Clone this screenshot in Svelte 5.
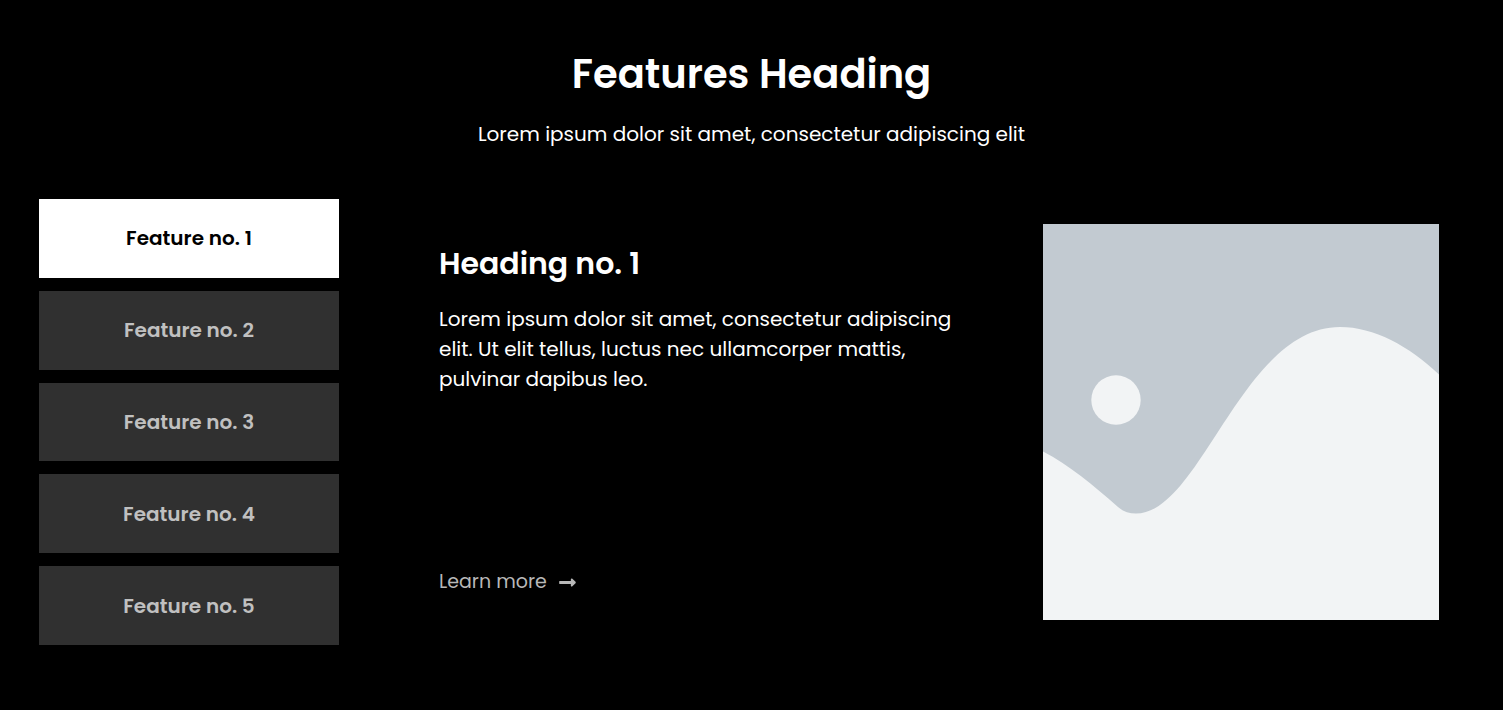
<script>
  const features = [1, 2, 3, 4, 5].map((n) => ({
    tab: `Feature no. ${n}`,
    heading: `Heading no. ${n}`
  }));
  let active = $state(0);
</script>

<section class="features">
  <header>
    <h1>Features Heading</h1>
    <p>Lorem ipsum dolor sit amet, consectetur adipiscing elit</p>
  </header>

  <div class="layout">
    <div class="tabs" role="tablist" aria-label="Features Heading">
      {#each features as feature, i}
        <button
          type="button"
          role="tab"
          id="tab-{i}"
          aria-selected={active === i}
          aria-controls="panel"
          class:active={active === i}
          onclick={() => (active = i)}>{feature.tab}</button>
      {/each}
    </div>

    <div class="panel" id="panel" role="tabpanel" aria-labelledby="tab-{active}">
      <div class="copy">
        <h2>{features[active].heading}</h2>
        <p>
          Lorem ipsum dolor sit amet, consectetur adipiscing elit. Ut elit tellus, luctus nec
          ullamcorper mattis, pulvinar dapibus leo.
        </p>
        <a href="#panel">
          <span>Learn more</span>
          <svg class="arrow" viewBox="0 0 448 512" aria-hidden="true">
            <path
              d="M313.941 216H12c-6.627 0-12 5.373-12 12v56c0 6.627 5.373 12 12 12h301.941v46.059c0 21.382 25.851 32.09 40.971 16.971l86.059-86.059c9.373-9.373 9.373-24.569 0-33.941l-86.059-86.059c-15.119-15.119-40.971-4.411-40.971 16.971V216z"
            />
          </svg>
        </a>
      </div>

      <svg class="picture" viewBox="0 0 396 396" aria-hidden="true">
        <rect width="396" height="396" fill="#c2cad1" />
        <circle cx="73" cy="176" r="24.7" fill="#f2f4f5" />
        <path
          d="M0 227.5C26 241 50 261 75 283C80 287.500 86 289.500 93 289.500C158 289.500 199 103 297 103C331 103 366 122 396 150.500V396H0Z"
          fill="#f2f4f5"
        />
      </svg>
    </div>
  </div>
</section>

<style>
  :global(body) {
    margin: 0;
    background: #000;
  }
  .features {
    box-sizing: border-box;
    padding: 44px 39px 65px;
    color: #fff;
    font-family: Poppins, Lato, sans-serif;
    font-size: 20px;
    line-height: 30px;
  }
  header {
    text-align: center;
  }
  h1,
  h2,
  p {
    margin: 0;
  }
  h1 {
    font-size: 40px;
    line-height: 60px;
    font-weight: 600;
  }
  header p {
    margin-top: 15px;
  }
  .layout {
    display: flex;
    gap: 100px;
    margin-top: 50px;
  }
  .tabs {
    flex: 0 0 300px;
    display: flex;
    flex-direction: column;
    gap: 13px;
  }
  button {
    flex: 1;
    border: 0;
    padding: 0 20px;
    background: #303030;
    color: #c0c0c0;
    font: inherit;
    font-weight: 600;
    cursor: pointer;
  }
  button.active {
    background: #fff;
    color: #000;
  }
  .panel {
    flex: 1;
    display: flex;
    justify-content: space-between;
    gap: 80px;
    padding: 25px 25px 25px 0;
  }
  .copy {
    flex: 1;
    max-width: 524px;
    display: flex;
    flex-direction: column;
    align-items: flex-start;
    padding: 20px 0 23px;
  }
  h2 {
    font-size: 30px;
    line-height: 40px;
    font-weight: 600;
  }
  .copy p {
    margin-top: 20px;
  }
  a {
    display: flex;
    align-items: center;
    gap: 12px;
    margin-top: auto;
    color: #b8b8b8;
    font-size: 19px;
    text-decoration: none;
  }
  .arrow {
    display: block;
    width: 17px;
    height: 19px;
    fill: currentColor;
  }
  .picture {
    flex: 0 0 396px;
    height: 396px;
  }
</style>
